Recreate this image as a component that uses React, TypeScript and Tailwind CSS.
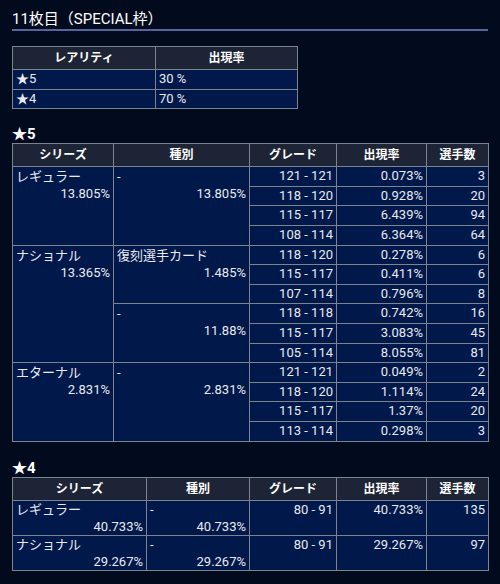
type Row = {
  series?: { name: string; rate: string; span: number };
  kind?: { name: string; rate: string; span: number };
  grade: string;
  rate: string;
  count: string;
};

const star5: Row[] = [
  { series: { name: "レギュラー", rate: "13.805%", span: 4 }, kind: { name: "-", rate: "13.805%", span: 4 }, grade: "121 - 121", rate: "0.073%", count: "3" },
  { grade: "118 - 120", rate: "0.928%", count: "20" },
  { grade: "115 - 117", rate: "6.439%", count: "94" },
  { grade: "108 - 114", rate: "6.364%", count: "64" },
  { series: { name: "ナショナル", rate: "13.365%", span: 6 }, kind: { name: "復刻選手カード", rate: "1.485%", span: 3 }, grade: "118 - 120", rate: "0.278%", count: "6" },
  { grade: "115 - 117", rate: "0.411%", count: "6" },
  { grade: "107 - 114", rate: "0.796%", count: "8" },
  { kind: { name: "-", rate: "11.88%", span: 3 }, grade: "118 - 118", rate: "0.742%", count: "16" },
  { grade: "115 - 117", rate: "3.083%", count: "45" },
  { grade: "105 - 114", rate: "8.055%", count: "81" },
  { series: { name: "エターナル", rate: "2.831%", span: 4 }, kind: { name: "-", rate: "2.831%", span: 4 }, grade: "121 - 121", rate: "0.049%", count: "2" },
  { grade: "118 - 120", rate: "1.114%", count: "24" },
  { grade: "115 - 117", rate: "1.37%", count: "20" },
  { grade: "113 - 114", rate: "0.298%", count: "3" },
];

const star4 = [
  { name: "レギュラー", rate: "40.733%", grade: "80 - 91", count: "135" },
  { name: "ナショナル", rate: "29.267%", grade: "80 - 91", count: "97" },
];

const th = "border border-[#7c828e] bg-[#1d2435] h-[23px] p-0 text-center text-[12px] font-bold text-white";
const td = "border border-[#7c828e] bg-[#01184a] px-[3px] py-0 text-[13px] leading-[18.6px] text-[#e8eaf0]";

function Head() {
  return (
    <thead>
      <tr>
        <th className={th}>シリーズ</th>
        <th className={th}>種別</th>
        <th className={th}>グレード</th>
        <th className={th}>出現率</th>
        <th className={th}>選手数</th>
      </tr>
    </thead>
  );
}

function Span({ name, rate, lh }: { name: string; rate: string; lh: string }) {
  return (
    <div className={`pt-[1px] ${lh}`}>
      <div>{name}</div>
      <div className="text-right">{rate}</div>
    </div>
  );
}

export default function App() {
  return (
    <div className="min-h-[584px] bg-[#020b1e] px-3 font-[Roboto,'Noto_Sans_CJK_JP',sans-serif] text-[#e8eaf0]">
      <h1 className="border-b-2 border-[#56669a] pt-[9px] text-[15px] leading-[20px] text-white">
        11枚目（SPECIAL枠）
      </h1>

      <table className="mt-[15px] table-fixed border-collapse">
        <colgroup>
          <col className="w-[143px]" />
          <col className="w-[142px]" />
        </colgroup>
        <thead>
          <tr>
            <th className={th}>レアリティ</th>
            <th className={th}>出現率</th>
          </tr>
        </thead>
        <tbody>
          <tr>
            <td className={td}>★5</td>
            <td className={td}>30 %</td>
          </tr>
          <tr>
            <td className={td}>★4</td>
            <td className={td}>70 %</td>
          </tr>
        </tbody>
      </table>

      <h2 className="mt-[16px] text-[15px] font-bold leading-[18px] text-white">★5</h2>
      <table className="w-[476px] table-fixed border-collapse">
        <colgroup>
          <col className="w-[101px]" />
          <col className="w-[136px]" />
          <col className="w-[87px]" />
          <col className="w-[90px]" />
          <col className="w-[62px]" />
        </colgroup>
        <Head />
        <tbody>
          {star5.map((r, i) => (
            <tr key={i}>
              {r.series && (
                <td rowSpan={r.series.span} className={`${td} align-top`}>
                  <Span name={r.series.name} rate={r.series.rate} lh="leading-[17px]" />
                </td>
              )}
              {r.kind && (
                <td rowSpan={r.kind.span} className={`${td} align-top`}>
                  <Span name={r.kind.name} rate={r.kind.rate} lh="leading-[17px]" />
                </td>
              )}
              <td className={`${td} text-right`}>{r.grade}</td>
              <td className={`${td} text-right`}>{r.rate}</td>
              <td className={`${td} text-right`}>{r.count}</td>
            </tr>
          ))}
        </tbody>
      </table>

      <h2 className="mt-[17.5px] text-[15px] font-bold leading-[18px] text-white">★4</h2>
      <table className="w-[476px] table-fixed border-collapse">
        <colgroup>
          <col className="w-[134px]" />
          <col className="w-[103px]" />
          <col className="w-[87px]" />
          <col className="w-[90px]" />
          <col className="w-[62px]" />
        </colgroup>
        <Head />
        <tbody>
          {star4.map((r) => (
            <tr key={r.name} className="h-[34px]">
              <td className={`${td} align-top`}>
                <Span name={r.name} rate={r.rate} lh="leading-[16.5px]" />
              </td>
              <td className={`${td} align-top`}>
                <Span name="-" rate={r.rate} lh="leading-[16.5px]" />
              </td>
              <td className={`${td} align-top text-right`}>
                <div className="pt-[1px] leading-[16.5px]">{r.grade}</div>
              </td>
              <td className={`${td} align-top text-right`}>
                <div className="pt-[1px] leading-[16.5px]">{r.rate}</div>
              </td>
              <td className={`${td} align-top text-right`}>
                <div className="pt-[1px] leading-[16.5px]">{r.count}</div>
              </td>
            </tr>
          ))}
        </tbody>
      </table>
    </div>
  );
}
